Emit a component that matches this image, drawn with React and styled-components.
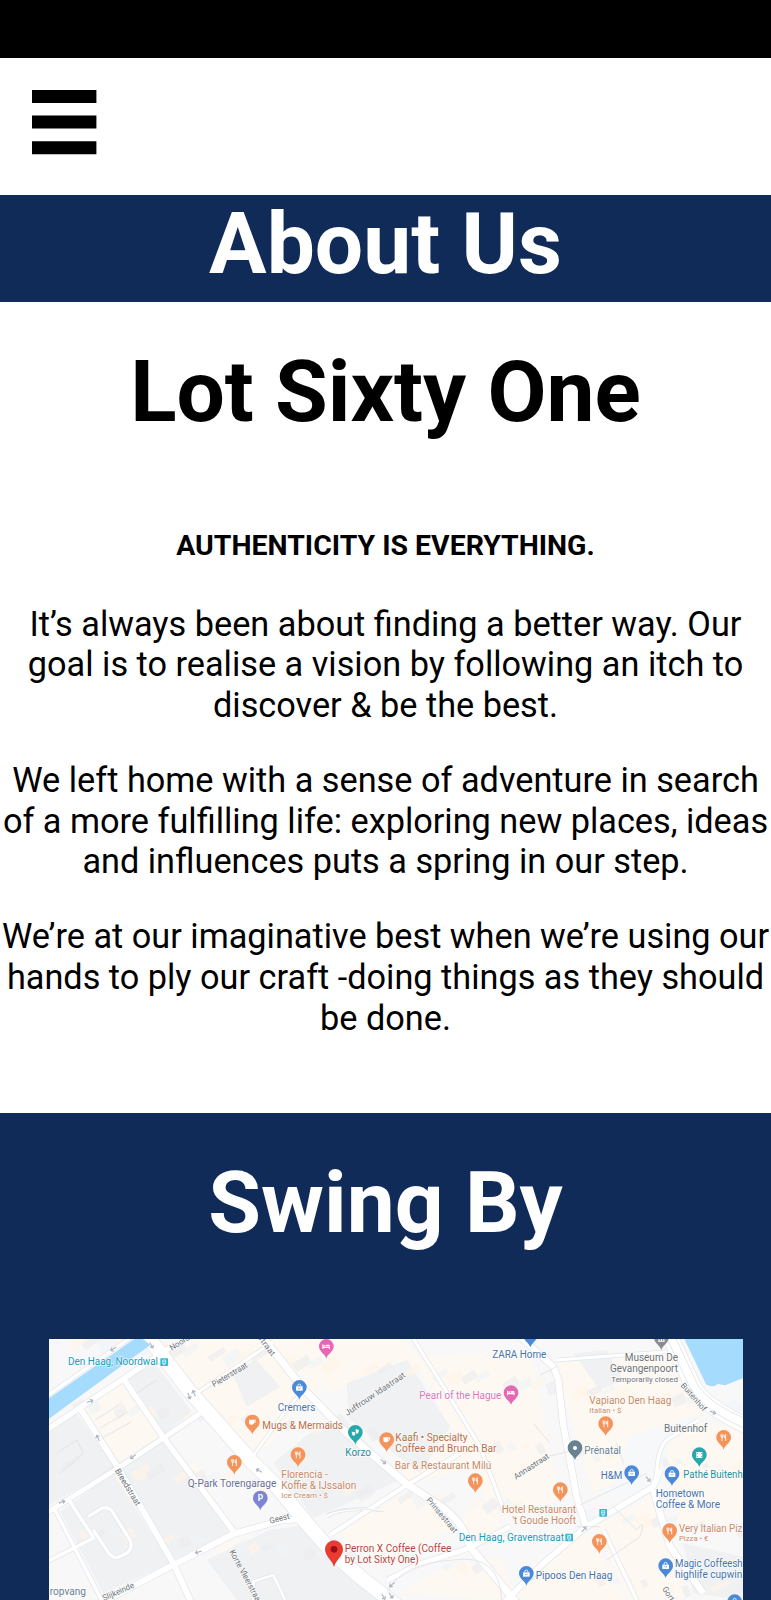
import React from "react";
import styled, { createGlobalStyle } from "styled-components";

const GlobalStyle = createGlobalStyle`
  html, body { margin: 0; padding: 0; background: #fff; }
  body { font-family: Roboto, "Liberation Sans", sans-serif; color: #000; }
`;

const NAVY = "#112b59";

const Page = styled.div`
  display: flex;
  flex-direction: column;
  height: 1600px;
  overflow: hidden;
`;
const StatusBar = styled.div`
  flex: none;
  height: 58px;
  background: #000;
`;
const Header = styled.header`
  flex: none;
  box-sizing: border-box;
  height: 137px;
  padding: 32px;
`;
const MenuButton = styled.button`
  display: block;
  width: 65px;
  height: 65px;
  padding: 0;
  border: 0;
  background: none;
  svg { display: block; }
`;
const Title = styled.h1`
  margin: 0;
  font-size: 85.67px;
  font-weight: 700;
  line-height: 98px;
  text-align: center;
`;
const Banner = styled.div`
  flex: none;
  box-sizing: border-box;
  height: 107px;
  background: ${NAVY};
  color: #fff;
`;
const About = styled.section`
  flex: none;
  box-sizing: border-box;
  height: 811px;
  padding-top: 41px;
  text-align: center;
`;
const Tagline = styled.h5`
  margin: 88px 0 40.5px;
  font-size: 28.45px;
  font-weight: 700;
  line-height: 34px;
`;
const Paragraph = styled.p`
  margin: 0 0 34.2px;
  font-size: 34.27px;
  line-height: 40.7px;
  white-space: nowrap;
`;
const Visit = styled.section`
  flex: 1;
  padding: 41px 28px 0 49px;
  background: ${NAVY};
  color: #fff;
`;
const VisitTitle = styled(Title)`
  margin: 0 -28px 87px -49px;
`;
const MapFrame = styled.div`
  height: 261px;
  overflow: hidden;
  background: #fbf8f3;
  svg { display: block; }
`;

const C = {
  orange: "#f4935a", food: "#b96f48", foodSoft: "#c98a67", blue: "#4a8ad8", shop: "#4775ae",
  teal: "#24aaad", transit: "#219bbd", pink: "#e468b3", gray: "#6c7378", slate: "#688391",
};

/* x, y, text, colour, text length, size, rotation */
const LABELS = [
  [84, 105, "Den Haag, Noordwal", C.transit, 270],
  [29, 796, "ropvang", C.slate, 109],
  [443, 472, "Q-Park Torengarage", "#6b7099", 266],
  [667, 297, "Mugs & Mermaids", C.food, 242],
  [713, 242, "Cremers", C.shop, 113],
  [916, 377, "Korzo", "#258e9b", 77],
  [1066, 332, "Kaafi • Specialty", C.food, 217],
  [1066, 365, "Coffee and Brunch Bar", C.food, 303],
  [1064, 417, "Bar & Restaurant Milú", C.foodSoft, 290],
  [724, 444, "Florencia -", C.foodSoft, 139],
  [724, 476, "Koffie & IJssalon", C.foodSoft, 225],
  [724, 505, "Ice Cream • $", C.foodSoft, 140, 22],
  [1138, 208, "Pearl of the Hague", "#da78b6", 246],
  [1357, 85, "ZARA Home", C.shop, 162],
  [1256, 632, "Den Haag, Gravenstraat", C.transit, 316],
  [1385, 549, "Hotel Restaurant", C.foodSoft, 223],
  [1417, 581, "'t Goude Hooft", C.foodSoft, 191],
  [914, 665, "Perron X Coffee (Coffee", "#ba4740", 320],
  [914, 698, "by Lot Sixty One)", "#ba4740", 222],
  [1754, 93, "Museum De", C.gray, 160],
  [1710, 126, "Gevangenpoort", C.gray, 204],
  [1714, 155, "Temporarily closed", C.gray, 200, 23],
  [1648, 223, "Vapiano Den Haag", C.foodSoft, 246],
  [1648, 250, "Italian • $", C.foodSoft, 96, 21],
  [1872, 306, "Buitenhof", C.gray, 130],
  [1633, 371, "Prénatal", C.slate, 110],
  [1682, 446, "H&M", C.shop, 65],
  [1930, 445, "Pathé Buitenh", "#258e9b", 178],
  [1847, 500, "Hometown", C.shop, 146],
  [1847, 534, "Coffee & More", C.shop, 193],
  [1917, 606, "Very Italian Piz", C.foodSoft, 190],
  [1917, 634, "Pizza • €", C.foodSoft, 88, 22],
  [1905, 710, "Magic Coffeesh", C.shop, 203],
  [1905, 743, "highlife cupwin", C.shop, 202],
  [1487, 748, "Pipoos Den Haag", C.shop, 230],
  [395, 62, "Noord", C.gray, 66, 24, -32],
  [522, 172, "Pieterstraat", C.gray, 119, 25, -31],
  [652, 22, "straat", C.gray, 72, 24, 54],
  [224, 422, "Breedstraat", C.gray, 125, 25, 59],
  [568, 665, "Korte Vleerstraat", C.gray, 178, 25, 62],
  [192, 813, "Slijkeinde", C.gray, 101, 25, -24],
  [691, 581, "Geest", C.gray, 61, 25, -14],
  [922, 258, "Juffrouw Idastraat", C.gray, 212, 25, -34],
  [1158, 511, "Prinsestraat", C.gray, 130, 24, 50],
  [1428, 449, "Annastraat", C.gray, 121, 25, -33],
  [1921, 167, "Buitenhof", C.gray, 104, 24, 49],
  [1866, 776, "Gort", C.gray, 46, 25, 58],
];

/* x and y of the pin head's centre, colour, symbol */
const PINS = [
  [637, 277, C.orange, "cup"], [583, 398, C.orange, "food"], [661, 505, "#7d84d4", "parking"],
  [859, 50, C.pink, "bed"], [778, 173, C.blue, "bag"], [946, 308, C.teal, "mask"],
  [1040, 330, C.orange, "cup"], [774, 375, C.orange, "food"], [1306, 453, C.orange, "food"],
  [1413, 189, C.pink, "bed"], [1471, 16, C.blue, "bag"], [1864, 24, "#888c92", "museum"],
  [1697, 282, C.orange, "food"], [1605, 354, "#69828f", "dot"], [2051, 323, C.orange, "food"],
  [1978, 375, C.teal, "film"], [1775, 429, C.blue, "bag"], [1896, 432, C.blue, "bag"],
  [1561, 480, C.orange, "food"], [1889, 603, C.orange, "food"], [1678, 635, C.orange, "food"],
  [1877, 708, C.blue, "bag"], [1459, 731, C.blue, "bag"], [2084, 816, C.blue, "bag"],
];

function Symbol({ kind }) {
  const line = { fill: "none", stroke: "#fff", strokeWidth: 2.6 };
  switch (kind) {
    case "food":
      return <path {...line} d="M-8-10v6q0 4 3 4t3-4v-6M-5-10v20M6 10v-20q-4 2-4 10h4" />;
    case "cup":
      return <path fill="#fff" d="M-10-8h20v6q0 4-5 4-1 5-6 5h-3q-6 0-6-6zM5-5v4h2v-4z" />;
    case "bag":
      return <g><path fill="#fff" d="M-10-4h20v13h-20z" /><path {...line} d="M-5-4q0-7 5-7t5 7" /><path stroke={C.blue} strokeWidth="2" fill="none" d="M-4 1q4 5 8 0" /></g>;
    case "bed":
      return <path fill="#fff" d="M-12-7h3v7h20v7h-3v-3h-17v3h-3zM-1-6h9q3 1 3 5H-1zM-8-5h5v4h-5z" />;
    case "mask":
      return <path fill="#fff" d="M1-11l10 3-2 9q-5 4-8 0zM-11-3l9 1 2 8q-4 6-9 1z" />;
    case "film":
      return <path fill="#fff" fillRule="evenodd" d="M-9-9H9V9H-9zM-7-6h2v3h-2zM5-6h2v3H5zM-7 3h2v3h-2zM5 3h2v3H5z" />;
    case "museum":
      return <path fill="#fff" d="M-10-4L0-10l10 6v3h-20zM-8 1h3v7h-3zM-1 1h3v7h-3zM6 1h3v7H6zM-10 8h20v3h-20z" />;
    case "dot":
      return <circle r="6" fill="#fff" />;
    case "parking":
      return <text y="9" textAnchor="middle" fill="#fff" fontSize="25" fontWeight="700">P</text>;
    default:
      return null;
  }
}

function Pin({ x, y, color, kind }) {
  return (
    <g transform={`translate(${x} ${y})`}>
      <path d="M0 36C-4 21-22 16-22-1a22 22 0 0 1 44 0C22 16 4 21 0 36Z" fill={color} />
      <Symbol kind={kind} />
    </g>
  );
}

/* Gray blocks, cream blocks and the roads between them */
const GRAY = [
  "M265 145L340 95 455 245 375 310Z", "M27 305L110 250 225 415 27 525Z",
  "M245 420L365 335 575 605 405 690Z", "M60 545L220 430 390 700 190 790Z",
  "M920 160L1100 90 1230 290 1140 430 925 265Z", "M790 325L900 250 1080 450 820 565 700 400Z",
  "M575 125L650 90 720 170 620 230Z", "M690 600L800 585 1040 810 590 810 500 690Z",
  "M1930 640L2109 680 2109 810 1960 790Z", "M1600 70L1700 60 1750 150 1680 180Z",
];
const CREAM = [
  "M130 240L240 165 360 320 235 395Z", "M390 70L470 27 760 27 860 150 660 370 480 210Z",
  "M410 430L470 400 560 580 430 620Z", "M880 610L1110 480 1240 590 1050 700Z",
  "M750 27L1090 27 1150 110 860 190Z", "M1120 80L1470 60 1560 510 1370 570Z",
  "M1000 290L1140 200 1310 410 1110 460Z", "M1540 100L1920 70 2010 250 1780 420 1660 490Z",
  "M1070 790L1200 720 1380 680 1430 810Z", "M1660 590L1840 500 1950 800 1770 810Z",
  "M1870 270L2109 290 2109 560 1910 600Z", "M530 650L600 620 660 780 580 810Z",
  "M1440 730L1640 600 1760 810 1440 810Z", "M1320 510L1420 630 1240 600Z",
];
const ROADS = [
  ["M10 205L290 10", 10], ["M10 307L115 236 250 147 390 52", 16],
  ["M315 10L450 185 640 400 705 463 800 580 880 670 965 745 1075 830", 42],
  ["M470 190L700 35", 9],
  ["M250 145L370 322 585 610", 17], ["M120 235L235 414 400 700 455 820", 18],
  ["M10 555L235 414 370 324 480 250", 15], ["M180 820L400 705 580 612 720 572 810 565", 18],
  ["M27 692L165 622M45 540L190 820M85 508L160 622", 11],
  ["M145 560L180 538Q205 525 220 550L270 630Q280 655 260 670L235 682Q218 685 205 668L160 600", 10],
  ["M630 390L720 265 780 190", 8], ["M640 810L640 755 700 735 735 810", 8],
  ["M675 30L785 170 910 300 1100 462 1190 520Q1270 570 1290 650L1440 830", 21],
  ["M870 615L1100 465 1260 370", 13], ["M860 560Q900 530 1020 540", 7],
  ["M1110 10L1210 170 1320 350 1395 550", 10],
  ["M1040 752L1130 705 1285 655 1410 590", 15], ["M1390 820L1510 700 1635 593 1840 470 1860 420", 17],
  ["M1440 20L1540 110 1555 150 1570 285 1610 500 1638 590", 19],
  ["M1550 90L1880 65", 9], ["M1840 480L1890 650 1990 790", 20],
  ["M1690 600L1795 820", 11], ["M1850 440Q1850 360 1880 330L1975 270", 10],
  ["M1888 15L1960 170Q1995 230 2125 290", 46],
];
const ARROWS = [
  [220, 57, 150], [150, 214, -20], [174, 324, -115], [279, 380, 145], [66, 516, -20],
  [475, 666, 165], [334, 46, 60], [447, 198, 70], [462, 190, -115], [657, 422, 210],
  [1030, 395, 42], [1056, 764, 140], [1053, 797, 55], [1030, 800, 60], [1824, 447, 50],
  [1632, 598, -50], [2018, 247, 22],
];
const STATIONS = [[361, 85], [1678, 537], [1576, 611]];

/* Building footprints that follow the tilt of the street grid */
const FOOTPRINTS = Array.from({ length: 150 }, (_, i) => {
  const x = 40 + ((i * 389) % 2050);
  const y = 40 + ((i * 223) % 750);
  return { x, y, w: 18 + ((i * 17) % 42), h: 12 + ((i * 11) % 26), gray: i % 3 };
});

function CityMap() {
  return (
    <svg width="694" height="261" viewBox="27 27 2082 783" fontFamily="Roboto, sans-serif">
      <rect x="27" y="27" width="2082" height="783" fill="#f8f8f9" />
      {CREAM.map((d) => <path key={d} d={d} fill="#fdf8f1" />)}
      {GRAY.map((d) => <path key={d} d={d} fill="#f0f1f2" />)}
      {FOOTPRINTS.map((b, i) => (
        <rect key={i} width={b.w} height={b.h} opacity=".65"
          transform={`translate(${b.x} ${b.y}) rotate(${b.x < 1500 ? -32 : -24})`}
          fill={["#f0f4f7", "#fff5e8", "#ecedf0"][b.gray]} />
      ))}
      <path d="M1740 410L1765 330 1790 310 1995 250 1890 335 1855 420 1820 480 1700 510Z" fill="#f7f8fa" />
      {ROADS.map(([d, w]) => <path key={d} d={d} fill="none" stroke="#e2e4e9" strokeWidth={w + 4} strokeLinejoin="round" />)}
      {ROADS.map(([d, w]) => <path key={d} d={d} fill="none" stroke="#fff" strokeWidth={w} strokeLinejoin="round" />)}
      <g fill="none" stroke="#dde1e6" strokeWidth="2.5">
        <path d="M1876 15L1948 170Q1985 240 2125 300M1903 15L1975 168Q2010 222 2125 270" />
        <path d="M1040 790Q1080 700 1240 690 1380 670 1385 810M860 550Q940 525 1030 545M1585 365L1520 380M1610 590H1680M1620 525L1820 430M1720 530L1790 600Q1820 560 1800 620L1700 690" />
        <path d="M165 270L245 220M180 295L255 250M290 190L350 150M185 325L275 275M50 370L110 330 130 370 60 430M1500 135L1550 110M1730 340L1750 400M1480 280L1530 340M1450 710L1480 750" />
      </g>
      <path d="M27 205L283 27H309L331 45 27 266Z" fill="#a5dcfd" />
      <path d="M1933 27L1998 163Q2018 175 2034 162L2055 166 2109 145V27Z" fill="#a5dcfd" />
      {ARROWS.map(([x, y, r]) => (
        <path key={`${x}-${y}`} transform={`translate(${x} ${y}) rotate(${r})`}
          d="M-10 0H8M2-6L9 0 2 6" fill="none" stroke="#b0b7c3" strokeWidth="3.5" />
      ))}
      {STATIONS.map(([x, y]) => (
        <g key={x} transform={`translate(${x} ${y})`}>
          <rect width="23" height="23" rx="2" fill="#37b8d2" />
          <path d="M7 5h9v11H7zM7 10h9M8 19h7" fill="none" stroke="#fff" strokeWidth="2" />
        </g>
      ))}
      {PINS.map(([x, y, color, kind]) => <Pin key={`${x}-${y}`} x={x} y={y} color={color} kind={kind} />)}
      <path d="M882 711C877 690 855 680 855 658a27 27 0 0 1 54 0C909 680 887 690 882 711Z" fill="#e83b32" />
      <circle cx="882" cy="658" r="10" fill="#980f14" />
      {LABELS.map(([x, y, text, color, length, size = 30, angle = 0]) => (
        <text key={`${x}-${y}`} transform={`translate(${x} ${y}) rotate(${angle})`} fill={color}
          stroke="#fff" strokeWidth="4" strokeOpacity=".75" paintOrder="stroke"
          fontSize={size} textLength={length} lengthAdjust="spacingAndGlyphs">{text}</text>
      ))}
    </svg>
  );
}

export default function App() {
  return (
    <Page>
      <GlobalStyle />
      <StatusBar />
      <Header>
        <MenuButton aria-label="Menu">
          <svg width="65" height="65" viewBox="0 0 65 65">
            <path d="M0 0H64.4V13H0ZM0 25.6H64.4V38.6H0ZM0 51.2H64.4V64.3H0Z" />
          </svg>
        </MenuButton>
      </Header>
      <Banner><Title>About Us</Title></Banner>
      <About>
        <Title as="h2">Lot Sixty One</Title>
        <Tagline>AUTHENTICITY IS EVERYTHING.</Tagline>
        <Paragraph>
          It’s always been about finding a better way. Our<br />
          goal is to realise a vision by following an itch to<br />
          discover &amp; be the best.
        </Paragraph>
        <Paragraph>
          We left home with a sense of adventure in search<br />
          of a more fulfilling life: exploring new places, ideas<br />
          and influences puts a spring in our step.
        </Paragraph>
        <Paragraph>
          We’re at our imaginative best when we’re using our<br />
          hands to ply our craft -doing things as they should<br />
          be done.
        </Paragraph>
      </About>
      <Visit>
        <VisitTitle as="h2">Swing By</VisitTitle>
        <MapFrame><CityMap /></MapFrame>
      </Visit>
    </Page>
  );
}
